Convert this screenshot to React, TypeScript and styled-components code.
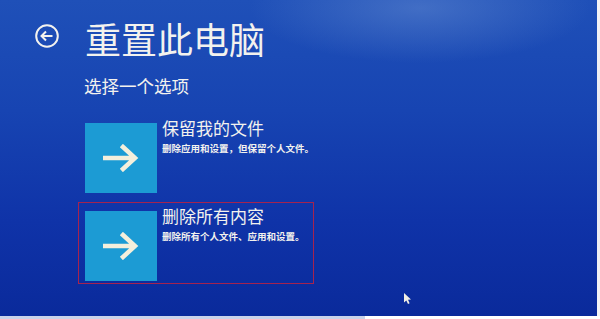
import styled, { createGlobalStyle } from "styled-components";

const GlobalStyle = createGlobalStyle`
  html, body {
    margin: 0;
    padding: 0;
    background: #ffffff;
    overflow: hidden;
  }
  * {
    box-sizing: border-box;
  }
`;

const Page = styled.div`
  width: 600px;
  height: 319px;
  display: flex;
  flex-direction: column;
  font-family: "Noto Sans CJK SC", "Noto Sans", sans-serif;
`;

const Row = styled.div`
  display: flex;
  height: 316px;
`;

const Screen = styled.div`
  position: relative;
  width: 597px;
  height: 316px;
  padding: 20px 0 0 35px;
  background:
    radial-gradient(
      ellipse 170px 55px at 420px 8px,
      rgba(100, 140, 210, 0.5) 0%,
      rgba(100, 140, 210, 0) 100%
    ),
    linear-gradient(180deg, #1f50b8 0%, #1744b2 35%, #0f33a8 70%, #0a2a9b 100%);
  color: #f3f2ee;
  overflow: hidden;
`;

const RightEdge = styled.div`
  width: 3px;
  background: linear-gradient(180deg, #f4f4f6 0%, #e8e8ee 50%, #f4f4f6 100%);
`;

const BottomBar = styled.div`
  display: flex;
  height: 3px;
  background: #ffffff;
`;

const BottomBand = styled.div`
  width: 365px;
  background: #c9d3ea;
`;

const Header = styled.div`
  display: flex;
  align-items: center;
  height: 36px;
`;

const BackButton = styled.div`
  width: 24px;
  height: 24px;
  margin-top: -4px;
  display: flex;
  align-items: center;
  justify-content: center;
`;

const Title = styled.h1`
  margin: 0 0 0 26px;
  font-size: 36px;
  line-height: 1;
  font-weight: 400;
`;

const Subtitle = styled.div`
  margin: 21px 0 0 49px;
  font-size: 17.5px;
  line-height: 1;
`;

const Options = styled.div`
  display: flex;
  flex-direction: column;
  gap: 6px;
  margin: 19px 0 0 43px;
`;

const Option = styled.div<{ $selected?: boolean }>`
  display: flex;
  gap: 5px;
  width: 236px;
  height: 82px;
  padding: 8px 6px 2px 6px;
  border: 1px solid ${(p) => (p.$selected ? "#a5234f" : "transparent")};
`;

const Tile = styled.div`
  width: 72px;
  height: 70px;
  flex-shrink: 0;
  background: #1c9bd4;
  display: flex;
  align-items: center;
  justify-content: center;
`;

const OptionText = styled.div`
  display: flex;
  flex-direction: column;
  gap: 5px;
  margin-top: -5px;
`;

const OptionTitle = styled.div`
  font-size: 17px;
  line-height: 1.2;
`;

const OptionDesc = styled.div`
  font-size: 9.5px;
  line-height: 1.2;
  font-weight: 700;
  white-space: nowrap;
`;

const Cursor = styled.svg`
  position: absolute;
  left: 403px;
  top: 292px;
`;

const Arrow = () => (
  <svg width="36" height="28" viewBox="0 0 36 28">
    <path
      d="M2 14 H31 M20 3 L32 14 L20 25"
      fill="none"
      stroke="#f4efdc"
      strokeWidth="4.5"
      strokeLinecap="square"
      strokeLinejoin="miter"
    />
  </svg>
);

const options = [
  { title: "保留我的文件", desc: "删除应用和设置，但保留个人文件。" },
  { title: "删除所有内容", desc: "删除所有个人文件、应用和设置。", selected: true },
];

export default function App() {
  return (
    <>
      <GlobalStyle />
      <Page>
        <Row>
          <Screen>
            <Header>
              <BackButton>
                <svg width="24" height="24" viewBox="0 0 24 24">
                  <circle cx="12" cy="12" r="10.8" fill="none" stroke="#f3f2ee" strokeWidth="2" />
                  <path
                    d="M6.5 12 H17.5 M11 7.5 L6.5 12 L11 16.5"
                    fill="none"
                    stroke="#f3f2ee"
                    strokeWidth="2"
                  />
                </svg>
              </BackButton>
              <Title>重置此电脑</Title>
            </Header>
            <Subtitle>选择一个选项</Subtitle>
            <Options>
              {options.map((o) => (
                <Option key={o.title} $selected={o.selected}>
                  <Tile>
                    <Arrow />
                  </Tile>
                  <OptionText>
                    <OptionTitle>{o.title}</OptionTitle>
                    <OptionDesc>{o.desc}</OptionDesc>
                  </OptionText>
                </Option>
              ))}
            </Options>
            <Cursor width="9" height="13" viewBox="0 0 9 13">
              <path d="M1 1 L1 10.5 L3.3 8.4 L5 12 L6.6 11.3 L5 7.8 L8 7.6 Z" fill="#f2efe4" />
            </Cursor>
          </Screen>
          <RightEdge />
        </Row>
        <BottomBar>
          <BottomBand />
        </BottomBar>
      </Page>
    </>
  );
}
